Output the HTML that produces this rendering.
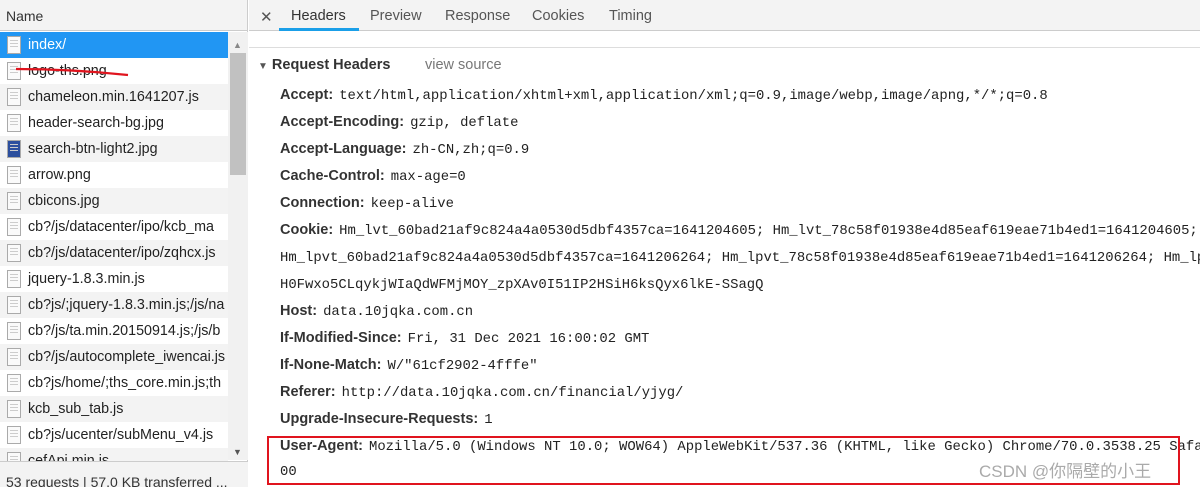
<!DOCTYPE html>
<html><head><meta charset="utf-8"><style>
*{margin:0;padding:0;box-sizing:border-box}
body{width:1200px;height:487px;overflow:hidden;background:#fff;font-family:"Liberation Sans","Noto Sans CJK SC",sans-serif;position:relative;color:#303030}
.left{position:absolute;left:0;top:0;width:248px;height:487px;border-right:1px solid #ccc}
.lh{height:31px;background:#f3f3f3;border-bottom:1px solid #ccc;font-size:14px;padding:8px 0 0 6px;color:#333}
.row{position:absolute;left:0;width:228px;height:26px;font-size:14.3px;padding:5px 0 0 28px;white-space:nowrap;overflow:hidden;color:#222}
.row.g{background:#f3f3f3}
.row.sel{background:#2196f3;color:#fff}
.ic{position:absolute;left:7px;top:4px;width:14px;height:18px;border:1px solid #aaa;background:#fafafa}
.ic::after{content:"";position:absolute;left:2px;top:3px;width:8px;height:9px;background:repeating-linear-gradient(#ccc 0 1px,transparent 1px 3px)}
.sb{position:absolute;left:228px;top:32px;width:20px;height:428px;background:#f1f1f1}
.thumb{position:absolute;left:230px;top:53px;width:16px;height:122px;background:#c1c1c1}
.foot{position:absolute;left:0;top:461px;width:248px;height:26px;background:#f3f3f3;border-top:1px solid #ccc;font-size:14px;padding:12px 0 0 6px;white-space:nowrap;overflow:hidden;color:#333}
.rh{position:absolute;left:249px;top:0;width:951px;height:31px;background:#f3f3f3;border-bottom:1px solid #ccc;font-size:14.5px;color:#555}
.rh span{position:absolute;top:7px}
.k{position:absolute;left:280px;font-size:14.5px;font-weight:bold;color:#333;white-space:nowrap}
.v{font-family:"Liberation Mono",monospace;font-weight:normal;font-size:13.9px;color:#222;margin-left:6px}
.m{position:absolute;left:280px;font-family:"Liberation Mono",monospace;font-size:13.9px;color:#222;white-space:nowrap}
</style></head><body>
<div class="left">
<div class="lh">Name</div>
</div>
<div class="row sel" style="top:32px"><div class="ic"></div>index/</div>
<div class="row" style="top:58px"><div class="ic"></div>logo-ths.png</div>
<div class="row g" style="top:84px"><div class="ic"></div>chameleon.min.1641207.js</div>
<div class="row" style="top:110px"><div class="ic"></div>header-search-bg.jpg</div>
<div class="row g" style="top:136px"><div class="ic" style="background:#2c4f9e"></div>search-btn-light2.jpg</div>
<div class="row" style="top:162px"><div class="ic"></div>arrow.png</div>
<div class="row g" style="top:188px"><div class="ic"></div>cbicons.jpg</div>
<div class="row" style="top:214px"><div class="ic"></div>cb?/js/datacenter/ipo/kcb_ma</div>
<div class="row g" style="top:240px"><div class="ic"></div>cb?/js/datacenter/ipo/zqhcx.js</div>
<div class="row" style="top:266px"><div class="ic"></div>jquery-1.8.3.min.js</div>
<div class="row g" style="top:292px"><div class="ic"></div>cb?js/;jquery-1.8.3.min.js;/js/na</div>
<div class="row" style="top:318px"><div class="ic"></div>cb?/js/ta.min.20150914.js;/js/b</div>
<div class="row g" style="top:344px"><div class="ic"></div>cb?/js/autocomplete_iwencai.js</div>
<div class="row" style="top:370px"><div class="ic"></div>cb?js/home/;ths_core.min.js;th</div>
<div class="row g" style="top:396px"><div class="ic"></div>kcb_sub_tab.js</div>
<div class="row" style="top:422px"><div class="ic"></div>cb?js/ucenter/subMenu_v4.js</div>
<div class="row g" style="top:448px"><div class="ic"></div>cefApi.min.js</div>
<div class="sb"></div><div class="thumb"></div>
<div style="position:absolute;left:233px;top:40px;font-size:9px;color:#888">▲</div>
<div style="position:absolute;left:233px;top:447px;font-size:9px;color:#555">▼</div>
<svg style="position:absolute;left:0;top:62px" width="140" height="20"><path d="M16 7 C50 7 90 9 128 13" stroke="#e0141e" stroke-width="2.2" fill="none"/></svg>
<div class="foot">53 requests | 57.0 KB transferred ...</div>

<div class="rh">
<span style="left:11px;font-size:15px;color:#555;top:8px">✕</span>
<span style="left:42px;color:#333;top:8px">Headers</span>
<span style="left:121px;top:8px">Preview</span>
<span style="left:196px;top:8px">Response</span>
<span style="left:283px;top:8px">Cookies</span>
<span style="left:360px;top:8px">Timing</span>
<div style="position:absolute;left:30px;top:28px;width:80px;height:3px;background:#1a9fe8"></div>
</div>
<div style="position:absolute;left:249px;top:47px;width:951px;height:1px;background:#ddd"></div>
<div style="position:absolute;left:258px;top:57px;font-size:14.5px;font-weight:bold;color:#333"><span style="font-size:10px;color:#555">▼</span> Request Headers</div>
<div style="position:absolute;left:425px;top:57px;font-size:14.5px;color:#777">view source</div>

<div class="k" style="top:87px">Accept:<span class="v">text/html,application/xhtml+xml,application/xml;q=0.9,image/webp,image/apng,*/*;q=0.8</span></div>
<div class="k" style="top:114px">Accept-Encoding:<span class="v">gzip, deflate</span></div>
<div class="k" style="top:141px">Accept-Language:<span class="v">zh-CN,zh;q=0.9</span></div>
<div class="k" style="top:168px">Cache-Control:<span class="v">max-age=0</span></div>
<div class="k" style="top:195px">Connection:<span class="v">keep-alive</span></div>
<div class="k" style="top:222px">Cookie:<span class="v">Hm_lvt_60bad21af9c824a4a0530d5dbf4357ca=1641204605; Hm_lvt_78c58f01938e4d85eaf619eae71b4ed1=1641204605; Hm</span></div>
<div class="m" style="top:250px">Hm_lpvt_60bad21af9c824a4a0530d5dbf4357ca=1641206264; Hm_lpvt_78c58f01938e4d85eaf619eae71b4ed1=1641206264; Hm_lpvt</div>
<div class="m" style="top:277px">H0Fwxo5CLqykjWIaQdWFMjMOY_zpXAv0I51IP2HSiH6ksQyx6lkE-SSagQ</div>
<div class="k" style="top:303px">Host:<span class="v">data.10jqka.com.cn</span></div>
<div class="k" style="top:330px">If-Modified-Since:<span class="v">Fri, 31 Dec 2021 16:00:02 GMT</span></div>
<div class="k" style="top:357px">If-None-Match:<span class="v">W/"61cf2902-4fffe"</span></div>
<div class="k" style="top:384px">Referer:<span class="v">http://data.10jqka.com.cn/financial/yjyg/</span></div>
<div class="k" style="top:411px">Upgrade-Insecure-Requests:<span class="v">1</span></div>
<div class="k" style="top:438px">User-Agent:<span class="v">Mozilla/5.0 (Windows NT 10.0; WOW64) AppleWebKit/537.36 (KHTML, like Gecko) Chrome/70.0.3538.25 Safari</span></div>
<div class="m" style="top:464px">00</div>
<div style="position:absolute;left:979px;top:457px;font-size:17px;color:#aaa">CSDN @你隔壁的小王</div>
<div style="position:absolute;left:267px;top:436px;width:913px;height:49px;border:2px solid #e0141e"></div>
</body></html>
